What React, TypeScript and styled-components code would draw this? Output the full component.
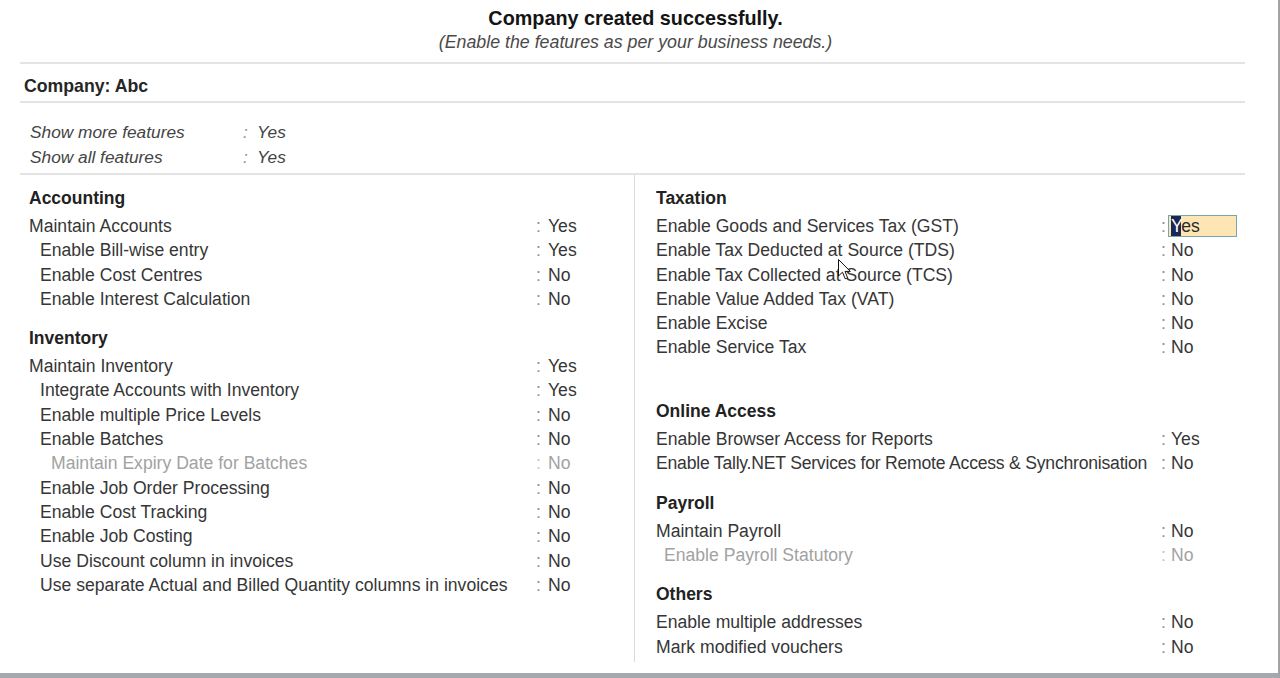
import React from "react";
import styled, { createGlobalStyle } from "styled-components";

const Global = createGlobalStyle`
  html, body { margin: 0; padding: 0; background: #ffffff; }
  body { font-family: "Liberation Sans", Arial, sans-serif; }
`;

const Frame = styled.div`
  position: relative;
  width: 1280px;
  height: 678px;
  box-sizing: border-box;
  border-right: 2px solid #a3a3a3;
  border-bottom: 5px solid #a6aaaf;
  padding: 0 33px 0 20px;
  display: flex;
  flex-direction: column;
  overflow: hidden;
  color: #333;
  background: #fff;
`;

const Header = styled.header`
  display: flex;
  flex-direction: column;
  align-items: center;
  padding: 8px 0 10px;
`;

const Title = styled.h1`
  margin: 0 0 0 6px;
  font-size: 19.8px;
  line-height: 20px;
  font-weight: 700;
  color: #141414;
`;

const Subtitle = styled.p`
  margin: 4px 0 0 6px;
  font-size: 17.8px;
  line-height: 20px;
  font-style: italic;
  color: #4a4a4a;
`;

const Rule = styled.div`
  height: 2px;
  background: #e4e4e4;
`;

const CompanyBar = styled.div`
  padding: 12px 0 5px 4px;
  font-size: 17.7px;
  line-height: 20px;
  font-weight: 700;
  color: #262626;
`;

const Options = styled.div`
  padding: 17px 0 3px 10px;
`;

const OptionRow = styled.div`
  display: grid;
  grid-template-columns: 213px 14px auto;
  height: 25px;
  line-height: 25px;
  font-size: 17.3px;
  font-style: italic;
  color: #444;
`;

const Main = styled.div`
  flex: 1;
  display: grid;
  grid-template-columns: 614px 1fr;
  margin-bottom: 11px;
`;

const Column = styled.div<{ $right?: boolean }>`
  display: flex;
  flex-direction: column;
  gap: 17px;
  padding: 13px 0 0 ${(p) => (p.$right ? "21px" : "9px")};
  border-left: ${(p) => (p.$right ? "1px solid #dadada" : "none")};
`;

const Section = styled.section`
  display: flex;
  flex-direction: column;
`;

const Heading = styled.h2`
  margin: 0 0 6px;
  font-size: 17.5px;
  line-height: 20px;
  font-weight: 700;
  color: #222;
`;

const Row = styled.div<{ $labelW: number; $colonW: number }>`
  display: grid;
  grid-template-columns: ${(p) => p.$labelW}px ${(p) => p.$colonW}px auto;
  align-items: center;
  height: 24.3px;
  font-size: 17.6px;
  line-height: 24.3px;
  white-space: nowrap;
`;

const Label = styled.span<{ $indent: number; $dim?: boolean; $tight?: boolean }>`
  padding-left: ${(p) => p.$indent}px;
  letter-spacing: ${(p) => (p.$tight ? "-0.22px" : "normal")};
  color: ${(p) => (p.$dim ? "#a2a2a2" : "#363636")};
`;

const Colon = styled.span<{ $dim?: boolean }>`
  color: ${(p) => (p.$dim ? "#c4c4c4" : "#8e8e8e")};
`;

const Value = styled.span<{ $dim?: boolean }>`
  color: ${(p) => (p.$dim ? "#a2a2a2" : "#363636")};
`;

const ActiveValue = styled.span`
  display: inline-block;
  box-sizing: border-box;
  width: 69px;
  height: 22px;
  margin-left: -3px;
  padding-left: 2px;
  line-height: 20px;
  background: #fde6b3;
  border: 1px solid #79a6ab;
  color: #2a2a2a;
`;

const Caret = styled.span`
  background: #1b2755;
  color: #fff;
`;

const Spacer = styled.div`
  height: 24.3px;
`;

const Pointer = styled.svg`
  position: absolute;
  left: 838px;
  top: 259px;
  width: 13px;
  height: 21px;
`;

type Item = {
  label: string;
  value: string;
  indent?: number;
  dim?: boolean;
  active?: boolean;
  tight?: boolean;
};
type Group = { title: string; items: Item[]; spacerAfter?: boolean };

const leftGroups: Group[] = [
  {
    title: "Accounting",
    items: [
      { label: "Maintain Accounts", value: "Yes" },
      { label: "Enable Bill-wise entry", value: "Yes", indent: 11 },
      { label: "Enable Cost Centres", value: "No", indent: 11 },
      { label: "Enable Interest Calculation", value: "No", indent: 11 },
    ],
  },
  {
    title: "Inventory",
    items: [
      { label: "Maintain Inventory", value: "Yes" },
      { label: "Integrate Accounts with Inventory", value: "Yes", indent: 11 },
      { label: "Enable multiple Price Levels", value: "No", indent: 11 },
      { label: "Enable Batches", value: "No", indent: 11 },
      { label: "Maintain Expiry Date for Batches", value: "No", indent: 22, dim: true },
      { label: "Enable Job Order Processing", value: "No", indent: 11 },
      { label: "Enable Cost Tracking", value: "No", indent: 11 },
      { label: "Enable Job Costing", value: "No", indent: 11 },
      { label: "Use Discount column in invoices", value: "No", indent: 11 },
      { label: "Use separate Actual and Billed Quantity columns in invoices", value: "No", indent: 11 },
    ],
  },
];

const rightGroups: Group[] = [
  {
    title: "Taxation",
    spacerAfter: true,
    items: [
      { label: "Enable Goods and Services Tax (GST)", value: "Yes", active: true },
      { label: "Enable Tax Deducted at Source (TDS)", value: "No" },
      { label: "Enable Tax Collected at Source (TCS)", value: "No" },
      { label: "Enable Value Added Tax (VAT)", value: "No" },
      { label: "Enable Excise", value: "No" },
      { label: "Enable Service Tax", value: "No" },
    ],
  },
  {
    title: "Online Access",
    items: [
      { label: "Enable Browser Access for Reports", value: "Yes" },
      {
        label: "Enable Tally.NET Services for Remote Access & Synchronisation",
        value: "No",
        tight: true,
      },
    ],
  },
  {
    title: "Payroll",
    items: [
      { label: "Maintain Payroll", value: "No" },
      { label: "Enable Payroll Statutory", value: "No", indent: 8, dim: true },
    ],
  },
  {
    title: "Others",
    items: [
      { label: "Enable multiple addresses", value: "No" },
      { label: "Mark modified vouchers", value: "No" },
    ],
  },
];

function Groups({ groups, labelW, colonW }: { groups: Group[]; labelW: number; colonW: number }) {
  return (
    <>
      {groups.map((g) => (
        <Section key={g.title}>
          <Heading>{g.title}</Heading>
          {g.items.map((it) => (
            <Row key={it.label} $labelW={labelW} $colonW={colonW}>
              <Label $indent={it.indent ?? 0} $dim={it.dim} $tight={it.tight}>
                {it.label}
              </Label>
              <Colon $dim={it.dim}>:</Colon>
              {it.active ? (
                <span>
                  <ActiveValue>
                    <Caret>{it.value[0]}</Caret>
                    {it.value.slice(1)}
                  </ActiveValue>
                </span>
              ) : (
                <Value $dim={it.dim}>{it.value}</Value>
              )}
            </Row>
          ))}
          {g.spacerAfter && <Spacer />}
        </Section>
      ))}
    </>
  );
}

export default function App() {
  return (
    <>
      <Global />
      <Frame>
        <Header>
          <Title>Company created successfully.</Title>
          <Subtitle>(Enable the features as per your business needs.)</Subtitle>
        </Header>
        <Rule />
        <CompanyBar>Company: Abc</CompanyBar>
        <Rule />
        <Options>
          <OptionRow>
            <span>Show more features</span>
            <Colon>:</Colon>
            <span>Yes</span>
          </OptionRow>
          <OptionRow>
            <span>Show all features</span>
            <Colon>:</Colon>
            <span>Yes</span>
          </OptionRow>
        </Options>
        <Rule />
        <Main>
          <Column>
            <Groups groups={leftGroups} labelW={507} colonW={12} />
          </Column>
          <Column $right>
            <Groups groups={rightGroups} labelW={505} colonW={10} />
          </Column>
        </Main>
        <Pointer viewBox="0 0 13 21">
          <path
            d="M0.5 0.5 L0.5 17 L4.5 13.2 L7.2 19.8 L9.6 18.8 L7 12.4 L12.3 12.4 Z"
            fill="#fff"
            stroke="#111"
            strokeWidth="1"
            strokeLinejoin="miter"
          />
        </Pointer>
      </Frame>
    </>
  );
}
